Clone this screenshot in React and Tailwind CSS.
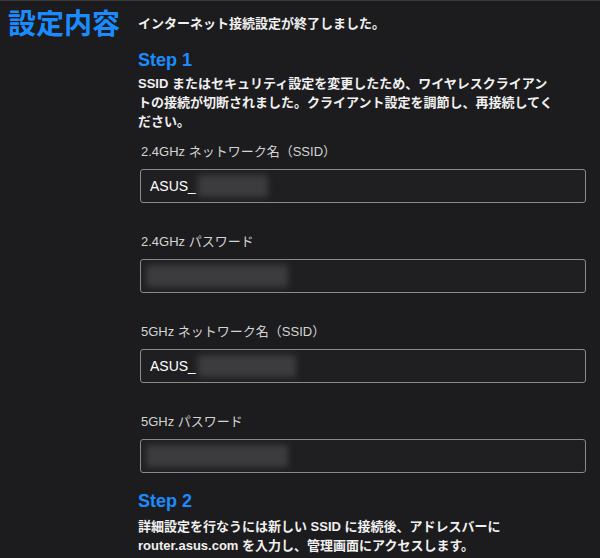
const FONT = { fontFamily: '"Liberation Sans", Arial, "Noto Sans CJK JP", sans-serif' };

const FIELDS = [
  { label: '2.4GHz ネットワーク名（SSID）', prefix: 'ASUS_', blur: 'w-[70px]' },
  { label: '2.4GHz パスワード', prefix: '', blur: 'w-[142px]' },
  { label: '5GHz ネットワーク名（SSID）', prefix: 'ASUS_', blur: 'w-[98px]' },
  { label: '5GHz パスワード', prefix: '', blur: 'w-[142px]' },
];

function Field({ label, prefix, blur }) {
  return (
    <div className="pl-[3px] mb-[29px] last:mb-0">
      <div className="text-[13px] leading-[19px] text-[#d4d4d4]">{label}</div>
      <div className="mt-[8px] h-[34px] w-[446px] -ml-[1px] border border-[#8a8a8a] rounded-[3px] bg-[#1f1f21] flex items-center pl-[9px] overflow-hidden">
        {prefix && <span className="text-[14px] text-white">{prefix}</span>}
        <div className={`h-[22px] ${blur} bg-[#3c3c3e] blur-[3px] ${prefix ? 'ml-[2px]' : '-ml-[4px]'}`} />
      </div>
    </div>
  );
}

export default function App() {
  return (
    <div style={FONT} className="w-[600px] h-[558px] bg-[#1c1c1e] border-t border-[#3a3a3c] overflow-hidden flex">
      {/* left title */}
      <div className="w-[138px] shrink-0 pl-[8px] pt-[6px]">
        <h1 className="text-[28px] leading-[36px] font-bold text-[#1a8cff] whitespace-nowrap">設定内容</h1>
      </div>

      {/* right content */}
      <div className="flex-1 pt-[13px]">
        <p className="text-[13px] leading-[19px] font-bold text-[#f0f0f0]">インターネット接続設定が終了しました。</p>

        <h2 className="mt-[15px] text-[18px] leading-[24px] font-bold text-[#1a8cff]">Step 1</h2>
        <p className="mt-[2px] text-[13px] leading-[19px] font-bold text-[#f0f0f0] whitespace-nowrap">
          SSID またはセキュリティ設定を変更したため、ワイヤレスクライアン<br />
          トの接続が切断されました。クライアント設定を調節し、再接続してく<br />
          ださい。
        </p>

        <div className="mt-[11px]">
          {FIELDS.map((f) => (
            <Field key={f.label} {...f} />
          ))}
        </div>

        <h2 className="mt-[16px] text-[18px] leading-[24px] font-bold text-[#1a8cff]">Step 2</h2>
        <p className="mt-[4px] text-[13px] leading-[19px] font-bold text-[#f0f0f0] whitespace-nowrap">
          詳細設定を行なうには新しい SSID に接続後、アドレスバーに<br />
          router.asus.com を入力し、管理画面にアクセスします。
        </p>
      </div>
    </div>
  );
}
